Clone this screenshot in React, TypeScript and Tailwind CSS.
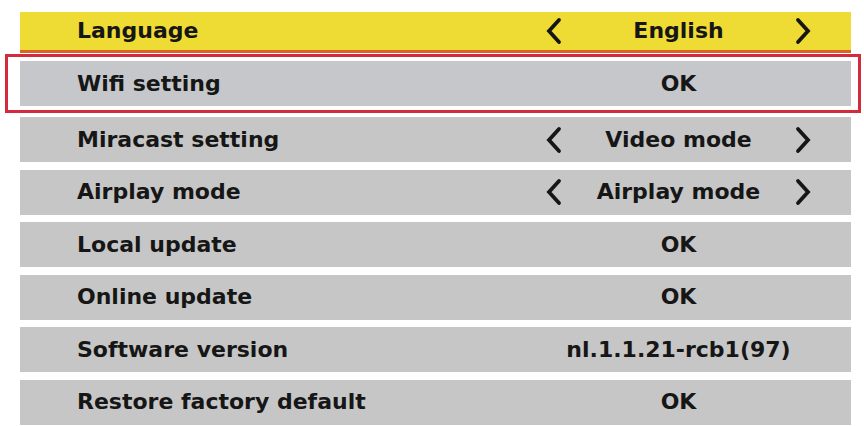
import React from 'react';

type Row = {
  label: string;
  value: string;
  arrows?: boolean;
};

const rows: Row[] = [
  { label: 'Miracast setting', value: 'Video mode', arrows: true },
  { label: 'Airplay mode', value: 'Airplay mode', arrows: true },
  { label: 'Local update', value: 'OK' },
  { label: 'Online update', value: 'OK' },
  { label: 'Software version', value: 'nl.1.1.21-rcb1(97)' },
  { label: 'Restore factory default', value: 'OK' },
];

const Chevron: React.FC<{ dir: 'left' | 'right' }> = ({ dir }) => (
  <svg width="18" height="28" viewBox="0 0 18 28" fill="none" stroke="#161616" strokeWidth="3.8" strokeLinecap="round" strokeLinejoin="miter">
    {dir === 'left' ? <polyline points="14,3 4,14 14,25" /> : <polyline points="4,3 14,14 4,25" />}
  </svg>
);

const Value: React.FC<{ value: string; arrows?: boolean }> = ({ value, arrows }) => (
  <div className="w-[341px] h-full grid grid-cols-[18px_1fr_18px] items-center pl-[35px] pr-[39px]">
    <div className="flex">{arrows && <Chevron dir="left" />}</div>
    <div className="text-center whitespace-nowrap">{value}</div>
    <div className="flex">{arrows && <Chevron dir="right" />}</div>
  </div>
);

const MenuRow: React.FC<{ row: Row; className?: string }> = ({ row, className }) => (
  <div className={`flex items-center justify-between ${className ?? ''}`}>
    <div className="pl-[57px] whitespace-nowrap">{row.label}</div>
    <Value value={row.value} arrows={row.arrows} />
  </div>
);

export default function App() {
  return (
    <div
      className="w-[864px] h-[426px] bg-white pt-[12px] overflow-hidden text-[22px] font-bold text-[#161616] leading-none"
      style={{ fontFamily: '"DejaVu Sans", Verdana, sans-serif' }}
    >
      <MenuRow
        row={{ label: 'Language', value: 'English', arrows: true }}
        className="ml-[20px] mr-[13px] h-[41px] bg-[#eedb34] border-b-[3px] border-[#dd6228]"
      />

      <div className="mt-[1px] ml-[5px] mr-[3px] border-[3px] border-[#d42a3e] pt-[4px] pb-[4px] pl-[12px] pr-[7px]">
        <MenuRow row={{ label: 'Wifi setting', value: 'OK' }} className="h-[45px] bg-[#c5c7cb]" />
      </div>

      <div className="mt-[4px] flex flex-col gap-[7.6px] ml-[20px] mr-[13px]">
        {rows.map((r) => (
          <MenuRow key={r.label} row={r} className="h-[45px] bg-[#c6c6c6]" />
        ))}
      </div>
    </div>
  );
}
